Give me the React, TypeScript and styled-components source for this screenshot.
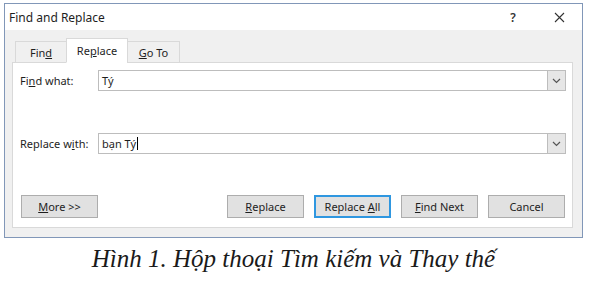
import { createGlobalStyle } from 'styled-components';
import styled from 'styled-components';

const GlobalStyle = createGlobalStyle`
	html, body {
		margin: 0;
		padding: 0;
		background: #fff;
	}
`;

const Page = styled.div`
	width: 589px;
	height: 283px;
	padding: 3px 0 0 4px;
	box-sizing: border-box;
	font-family: 'Noto Sans', 'Liberation Sans', sans-serif;
	font-size: 11px;
	color: #1e1e1e;
`;

const Dialog = styled.div`
	width: 579px;
	height: 235px;
	box-sizing: border-box;
	border: 1px solid #8197b8;
	background: #f0f0f0;
	display: flex;
	flex-direction: column;
`;

const TitleBar = styled.div`
	height: 26px;
	background: #fff;
	display: flex;
	align-items: center;
	padding: 0 0 0 4px;
	font-size: 12px;
`;

const Title = styled.div`
	flex: 1;
`;

const TitleButton = styled.div`
	width: 46px;
	display: flex;
	justify-content: center;
	align-items: center;
	color: #333;
	font-weight: 600;
	font-size: 12px;
`;

const Body = styled.div`
	flex: 1;
	padding: 8px 9px 0 7px;
	display: flex;
	flex-direction: column;
`;

const TabRow = styled.div`
	display: flex;
	align-items: flex-end;
	padding-left: 3px;
	height: 25px;
	margin-bottom: -1px;
	position: relative;
	z-index: 1;
`;

const Tab = styled.div<{ $active?: boolean; $w: number }>`
	width: ${(p) => p.$w}px;
	height: ${(p) => (p.$active ? '25px' : '22px')};
	box-sizing: border-box;
	display: flex;
	align-items: center;
	justify-content: center;
	background: ${(p) => (p.$active ? '#fff' : '#f0f0f0')};
	border: 1px solid #d9d9d9;
	border-bottom: ${(p) => (p.$active ? '1px solid #fff' : '1px solid #d9d9d9')};
	& + & {
		margin-left: -1px;
	}
`;

const Panel = styled.div`
	height: 166px;
	box-sizing: border-box;
	background: #fff;
	border: 1px solid #d9d9d9;
	padding: 7px 6px 0 7px;
	display: flex;
	flex-direction: column;
`;

const FieldRow = styled.div<{ $gap: number }>`
	display: flex;
	align-items: center;
	margin-top: ${(p) => p.$gap}px;
`;

const Label = styled.div`
	width: 78px;
`;

const Combo = styled.div`
	flex: 1;
	height: 21px;
	box-sizing: border-box;
	border: 1px solid #bdbdbd;
	display: flex;
	align-items: stretch;
`;

const ComboText = styled.div`
	flex: 1;
	display: flex;
	align-items: center;
	padding-left: 3px;
`;

const Caret = styled.span`
	display: inline-block;
	width: 1px;
	height: 13px;
	background: #000;
	margin-left: 1px;
`;

const ComboButton = styled.div`
	width: 17px;
	background: #e6e6e6;
	border-left: 1px solid #bdbdbd;
	display: flex;
	align-items: center;
	justify-content: center;
`;

const ButtonRow = styled.div`
	margin-top: auto;
	margin-bottom: 9px;
	display: flex;
	padding-left: 1px;
	padding-right: 1px;
`;

const Button = styled.div<{ $focused?: boolean; $spaced?: boolean }>`
	width: 77px;
	height: 23px;
	box-sizing: border-box;
	background: #e1e1e1;
	border: 1px solid ${(p) => (p.$focused ? '#2f97e0' : '#adadad')};
	box-shadow: ${(p) => (p.$focused ? 'inset 0 0 0 1px #2f97e0' : 'none')};
	display: flex;
	align-items: center;
	justify-content: center;
	margin-left: ${(p) => (p.$spaced ? 'auto' : '10px')};
	&:first-child {
		margin-left: 0;
	}
`;

const Caption = styled.div`
	margin-top: 6px;
	width: 579px;
	text-align: center;
	font-family: 'Liberation Serif', 'DejaVu Serif', serif;
	font-style: italic;
	font-size: 25px;
	line-height: 30px;
	color: #1a1a1a;
`;

const Chevron = () => (
	<svg width="9" height="6" viewBox="0 0 9 6">
		<path d="M1 1l3.5 3.5L8 1" fill="none" stroke="#555" strokeWidth="1.2" />
	</svg>
);

const CloseIcon = () => (
	<svg width="11" height="11" viewBox="0 0 11 11">
		<path d="M1 1l9 9M10 1l-9 9" stroke="#333" strokeWidth="1.1" />
	</svg>
);

const App = () => {
	return (
		<Page>
			<GlobalStyle />
			<Dialog>
				<TitleBar>
					<Title>Find and Replace</Title>
					<TitleButton>?</TitleButton>
					<TitleButton>
						<CloseIcon />
					</TitleButton>
				</TitleBar>
				<Body>
					<TabRow>
						<Tab $w={52}>
							<span>
								Fin<u>d</u>
							</span>
						</Tab>
						<Tab $w={62} $active>
							<span>
								Re<u>p</u>lace
							</span>
						</Tab>
						<Tab $w={53}>
							<span>
								<u>G</u>o To
							</span>
						</Tab>
					</TabRow>
					<Panel>
						<FieldRow $gap={0}>
							<Label>
								Fi<u>n</u>d what:
							</Label>
							<Combo>
								<ComboText>Tý</ComboText>
								<ComboButton>
									<Chevron />
								</ComboButton>
							</Combo>
						</FieldRow>
						<FieldRow $gap={42}>
							<Label>
								Replace w<u>i</u>th:
							</Label>
							<Combo>
								<ComboText>
									<span>bạn Tý</span>
									<Caret />
								</ComboText>
								<ComboButton>
									<Chevron />
								</ComboButton>
							</Combo>
						</FieldRow>
						<ButtonRow>
							<Button>
								<span>
									<u>M</u>ore &gt;&gt;
								</span>
							</Button>
							<Button $spaced>
								<span>
									<u>R</u>eplace
								</span>
							</Button>
							<Button $focused>
								<span>
									Replace <u>A</u>ll
								</span>
							</Button>
							<Button>
								<span>
									<u>F</u>ind Next
								</span>
							</Button>
							<Button>
								<span>Cancel</span>
							</Button>
						</ButtonRow>
					</Panel>
				</Body>
			</Dialog>
			<Caption>Hình 1. Hộp thoại Tìm kiếm và Thay thế</Caption>
		</Page>
	);
};

export default App;
